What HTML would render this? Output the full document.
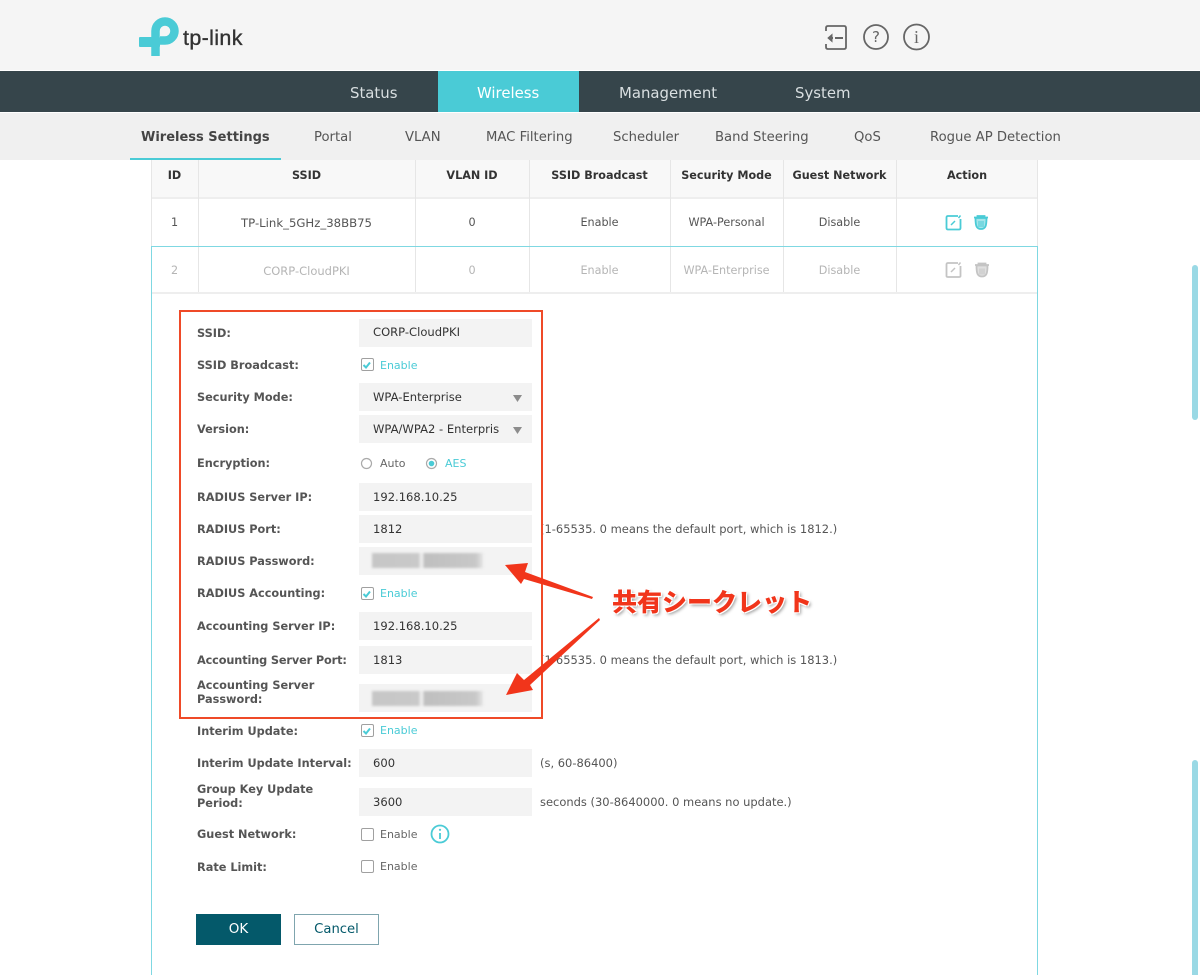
<!DOCTYPE html>
<html lang="en"><head><meta charset="utf-8"><title>TP-Link Wireless Settings</title>
<style>
html,body{margin:0;padding:0;background:#fff;height:975px;overflow:hidden}
body{width:1200px;height:975px;position:relative;overflow:hidden;font-family:"DejaVu Sans","Liberation Sans",sans-serif;font-size:11.5px;color:#555}
div,span.a,svg{position:absolute}
.t{white-space:nowrap;line-height:16px;height:16px}
.c{text-align:center}
.nav{color:#d9dfe1;font-size:14.9px;line-height:20px;top:83px;white-space:nowrap}
.sub{color:#555;font-size:13.2px;line-height:18px;top:129px;white-space:nowrap}
.th{font-weight:bold;color:#333;top:168px;text-align:center;line-height:16px;font-size:11.2px}
.td{top:215px;text-align:center;line-height:16px;color:#555;font-size:11.2px}
.td2{top:263px;text-align:center;line-height:16px;color:#b5b5b5;font-size:11.2px}
.vl{width:1px;background:#e6e6e6}
.l{left:197px;font-weight:bold;color:#555;font-size:11.3px;line-height:14px;white-space:nowrap}
.i{left:359px;width:173px;background:#f3f3f3;height:28px;line-height:28px;text-indent:14px;color:#333;font-size:11.55px;white-space:nowrap;overflow:hidden}
.e{left:380px;font-size:11px;color:#666;line-height:14px}
.on{color:#4acbd6}
.cb{left:361px;width:10.5px;height:10.5px;border:1.5px solid #a0a0a0;border-radius:2px;background:#fff}
.h{color:#555;font-size:11.47px;line-height:14px;white-space:nowrap}
.blur{left:372px;width:111px;height:15px;background:linear-gradient(90deg,#c6c6c6 0,#c9c9c9 47px,#ececec 48px,#ececec 51px,#bfbfbf 52px,#c8c8c8 104px,#e6e6e6 111px);filter:blur(1.2px)}
</style></head><body>

<div style="left:0;top:0;width:1200px;height:70px;background:#f5f5f5"></div>
<svg style="left:130px;top:10px" width="60" height="50" viewBox="130 10 60 50" fill="none">
<path d="M155.5 56V31A9.500 9.500 0 1 1 165 40.500H160" stroke="#4acbd6" stroke-width="8.500"/>
<rect x="139" y="37" width="21" height="10" rx="1" fill="#4acbd6"/>
</svg>
<div class="t" style="left:183px;top:25px;height:26px;line-height:26px;font-family:'Liberation Sans',sans-serif;font-size:21.500px;color:#333;letter-spacing:.35px;-webkit-text-stroke:.35px #333">tp-link</div>

<svg style="left:820px;top:20px" width="115" height="34" viewBox="820 20 115 34" fill="none" stroke="#666" stroke-width="1.8">
<path d="M826 31V28Q826 26 828 26H844Q846 26 846 28V47Q846 49 844 49H828Q826 49 826 47V44"/>
<path d="M835 38H843" stroke-width="2"/><path d="M829 38H833" stroke-width="2"/><path d="M832 34.500L828 38L832 41.500Z" fill="#666" stroke-width="1"/>
<circle cx="876" cy="37" r="12"/>
<circle cx="916.500" cy="37" r="12.500"/>
</svg>
<div class="t c" style="left:866px;top:28px;width:20px;height:18px;line-height:18px;font-size:15px;color:#666">?</div>
<div class="t c" style="left:906px;top:27px;width:21px;height:20px;line-height:20px;font-size:18px;color:#666;font-family:'Liberation Serif',serif">i</div>

<div style="left:0;top:71px;width:1200px;height:41px;background:#36454b"></div>
<div style="left:438px;top:71px;width:141px;height:41px;background:#4acbd6"></div>
<div class="nav" style="left:350px">Status</div>
<div class="nav" style="left:477px;color:#fff">Wireless</div>
<div class="nav" style="left:619px">Management</div>
<div class="nav" style="left:795px">System</div>

<div style="left:0;top:113px;width:1200px;height:47px;background:#f0f0f0"></div>
<div style="left:130px;top:158px;width:151px;height:2px;background:#4acbd6"></div>
<div class="sub" style="left:141px;font-weight:bold;color:#444;font-size:13px">Wireless Settings</div>
<div class="sub" style="left:314px">Portal</div>
<div class="sub" style="left:405px">VLAN</div>
<div class="sub" style="left:486px">MAC Filtering</div>
<div class="sub" style="left:613px">Scheduler</div>
<div class="sub" style="left:715px">Band Steering</div>
<div class="sub" style="left:854px">QoS</div>
<div class="sub" style="left:930px">Rogue AP Detection</div>

<div style="left:151px;top:160px;width:887px;height:38px;background:#f8f8f8"></div>
<div style="left:151px;top:197px;width:887px;height:2px;background:#eeeeee"></div>
<div class="vl" style="left:151px;top:160px;height:86px"></div>
<div class="vl" style="left:198px;top:160px;height:133px"></div>
<div class="vl" style="left:415px;top:160px;height:133px"></div>
<div class="vl" style="left:529px;top:160px;height:133px"></div>
<div class="vl" style="left:670px;top:160px;height:133px"></div>
<div class="vl" style="left:783px;top:160px;height:133px"></div>
<div class="vl" style="left:896px;top:160px;height:133px"></div>
<div class="vl" style="left:1037px;top:160px;height:86px"></div>
<div style="left:151px;top:292px;width:887px;height:1.500px;background:#eeeeee"></div>
<div style="left:151px;top:246px;width:887px;height:1px;background:#7fd8e2"></div>
<div style="left:151px;top:246px;width:1px;height:729px;background:#7fd8e2"></div>
<div style="left:1037px;top:246px;width:1px;height:729px;background:#7fd8e2"></div>

<div class="th" style="left:151px;width:47px">ID</div>
<div class="th" style="left:198px;width:217px">SSID</div>
<div class="th" style="left:415px;width:114px">VLAN ID</div>
<div class="th" style="left:529px;width:141px">SSID Broadcast</div>
<div class="th" style="left:670px;width:113px">Security Mode</div>
<div class="th" style="left:783px;width:113px">Guest Network</div>
<div class="th" style="left:896px;width:142px">Action</div>

<div class="td" style="left:151px;width:47px">1</div>
<div class="td" style="left:198px;width:217px;font-size:11.7px">TP-Link_5GHz_38BB75</div>
<div class="td" style="left:415px;width:114px">0</div>
<div class="td" style="left:529px;width:141px">Enable</div>
<div class="td" style="left:670px;width:113px">WPA-Personal</div>
<div class="td" style="left:783px;width:113px">Disable</div>

<div class="td2" style="left:151px;width:47px">2</div>
<div class="td2" style="left:198px;width:217px;font-size:11.500px">CORP-CloudPKI</div>
<div class="td2" style="left:415px;width:114px">0</div>
<div class="td2" style="left:529px;width:141px">Enable</div>
<div class="td2" style="left:670px;width:113px">WPA-Enterprise</div>
<div class="td2" style="left:783px;width:113px">Disable</div>

<svg style="left:940px;top:205px" width="60" height="75" viewBox="940 205 60 75" fill="none">
<g stroke="#4acbd6" stroke-width="1.8">
<path d="M958 216H948Q946.500 216 946.500 217.500V228Q946.500 229.500 948 229.500H959Q960.500 229.500 960.500 228V219"/>
<path d="M951 225L955 221M958.500 218L960.500 215.500" stroke-width="1.500"/>
<path d="M974 217.500H988M977.500 217.500V216H984.500V217.500"/>
<path d="M975.500 218C975.500 226 976.500 229 981 229C985.500 229 986.500 226 986.500 218Z" fill="#a4e5ea"/>
<path d="M979 221V227M981 221V227M983 221V227" stroke-width="1"/>
</g>
<g stroke="#c4c4c4" stroke-width="1.800">
<path d="M958 263H948Q946.500 263 946.500 264.500V276Q946.500 277 948 277H959Q960.500 277 960.500 276V266"/>
<path d="M951 272L955 268M958.500 265L960.500 262.500" stroke-width="1.500"/>
<path d="M975 265H989M978.500 265V263.500H985.500V265"/>
<path d="M976.500 265.500C976.500 273.500 977.500 276.500 982 276.500C986.500 276.500 987.500 273.500 987.500 265.500Z" fill="#e0e0e0"/>
<path d="M980 268.500V274.500M982 268.500V274.500M984 268.500V274.500" stroke-width="1"/>
</g>
</svg>

<div class="l" style="top:327px">SSID:</div>
<div class="i" style="top:319px;line-height:26px">CORP-CloudPKI</div>
<div class="l" style="top:359px">SSID Broadcast:</div>
<div class="cb" style="top:358px"></div>
<div class="e on" style="top:359px">Enable</div>
<div class="l" style="top:391px">Security Mode:</div>
<div class="i" style="top:383px">WPA-Enterprise</div>
<div class="l" style="top:423px">Version:</div>
<div class="i" style="top:415px">WPA/WPA2 - Enterpris</div>
<div class="l" style="top:457px">Encryption:</div>
<div class="e" style="top:457px">Auto</div>
<div class="e on" style="top:457px;left:445px">AES</div>
<div class="l" style="top:491px">RADIUS Server IP:</div>
<div class="i" style="top:483px">192.168.10.25</div>
<div class="l" style="top:523px">RADIUS Port:</div>
<div class="i" style="top:515px">1812</div>
<div class="h" style="left:540px;top:522px">(1-65535. 0 means the default port, which is 1812.)</div>
<div class="l" style="top:555px">RADIUS Password:</div>
<div class="i" style="top:547px"></div>
<div class="blur" style="top:553px"></div>
<div class="l" style="top:587px">RADIUS Accounting:</div>
<div class="cb" style="top:587px"></div>
<div class="e on" style="top:587px">Enable</div>
<div class="l" style="top:620px">Accounting Server IP:</div>
<div class="i" style="top:612px">192.168.10.25</div>
<div class="l" style="top:654px;letter-spacing:-.13px">Accounting Server Port:</div>
<div class="i" style="top:646px">1813</div>
<div class="h" style="left:540px;top:653px">(1-65535. 0 means the default port, which is 1813.)</div>
<div class="l" style="top:679px">Accounting Server<br>Password:</div>
<div class="i" style="top:684px"></div>
<div class="blur" style="top:691px"></div>

<div class="l" style="top:725px">Interim Update:</div>
<div class="cb" style="top:724px"></div>
<div class="e on" style="top:724px">Enable</div>
<div class="l" style="top:757px">Interim Update Interval:</div>
<div class="i" style="top:749px">600</div>
<div class="h" style="left:540px;top:756px">(s, 60-86400)</div>
<div class="l" style="top:783px">Group Key Update<br>Period:</div>
<div class="i" style="top:788px">3600</div>
<div class="h" style="left:540px;top:795px">seconds (30-8640000. 0 means no update.)</div>
<div class="l" style="top:828px">Guest Network:</div>
<div class="cb" style="top:828px"></div>
<div class="e" style="top:828px">Enable</div>
<div class="l" style="top:861px">Rate Limit:</div>
<div class="cb" style="top:860px"></div>
<div class="e" style="top:860px">Enable</div>

<svg style="left:355px;top:350px" width="190" height="500" viewBox="355 350 190 500" fill="none">
<path d="M363.500 365L366 367.500L370 362.500M363.500 594L366 596.500L370 591.500M363.500 731L366 733.500L370 728.500" stroke="#4acbd6" stroke-width="2"/>
<circle cx="366.500" cy="463.500" r="5" stroke="#aaa" stroke-width="1.200"/>
<circle cx="431.500" cy="463.500" r="5" stroke="#aaa" stroke-width="1.200"/>
<circle cx="431.500" cy="463.500" r="2.800" fill="#4acbd6"/>
</svg>
<svg style="left:505px;top:390px" width="30" height="50" viewBox="505 390 30 50">
<path d="M513 395H522L517.500 402Z" fill="#8c8c8c"/><path d="M513 427H522L517.500 434Z" fill="#8c8c8c"/>
</svg>
<svg style="left:428px;top:822px" width="24" height="24" viewBox="428 822 24 24" fill="none">
<circle cx="440" cy="834" r="8.500" stroke="#4acbd6" stroke-width="1.800"/>
<path d="M440 833V839" stroke="#4acbd6" stroke-width="1.800"/><circle cx="440" cy="829.800" r="1.100" fill="#4acbd6"/>
</svg>

<div class="t c" style="left:196px;top:914px;width:85px;height:31px;line-height:31px;background:#04596a;color:#fff;font-size:13.500px">OK</div>
<div class="t c" style="left:294px;top:914px;width:83px;height:29px;line-height:30px;border:1px solid #7fa5ae;background:#fff;color:#04596a;font-size:13.200px">Cancel</div>

<div style="left:179px;top:310px;width:360px;height:405px;border:2px solid #ef4a28"></div>

<svg style="left:490px;top:550px" width="130" height="160" viewBox="490 550 130 160">
<path d="M505 565L528 563L525 572L593 597L592 599L524 579L521 584Z" fill="#f1351b"/>
<path d="M506 695L517 673L524 680L599 618L600 620L530 685L533 690Z" fill="#f1351b"/>
</svg>
<div class="t" style="left:612px;top:585px;height:32px;line-height:32px;font-family:'Noto Sans CJK JP',sans-serif;font-weight:900;font-size:25px;color:#f1351b;text-shadow:1px 1px 0 #fff,-1px -1px 0 #fff,1px -1px 0 #fff,-1px 1px 0 #fff,2px 2px 3px rgba(0,0,0,.4)">共有シークレット</div>

<div style="left:1191.500px;top:265px;width:6.500px;height:155px;border-radius:3px;background:#9ad9e5"></div>
<div style="left:1191.500px;top:760px;width:6.500px;height:215px;border-radius:3px 3px 0 0;background:#9ad9e5"></div>
</body></html>
